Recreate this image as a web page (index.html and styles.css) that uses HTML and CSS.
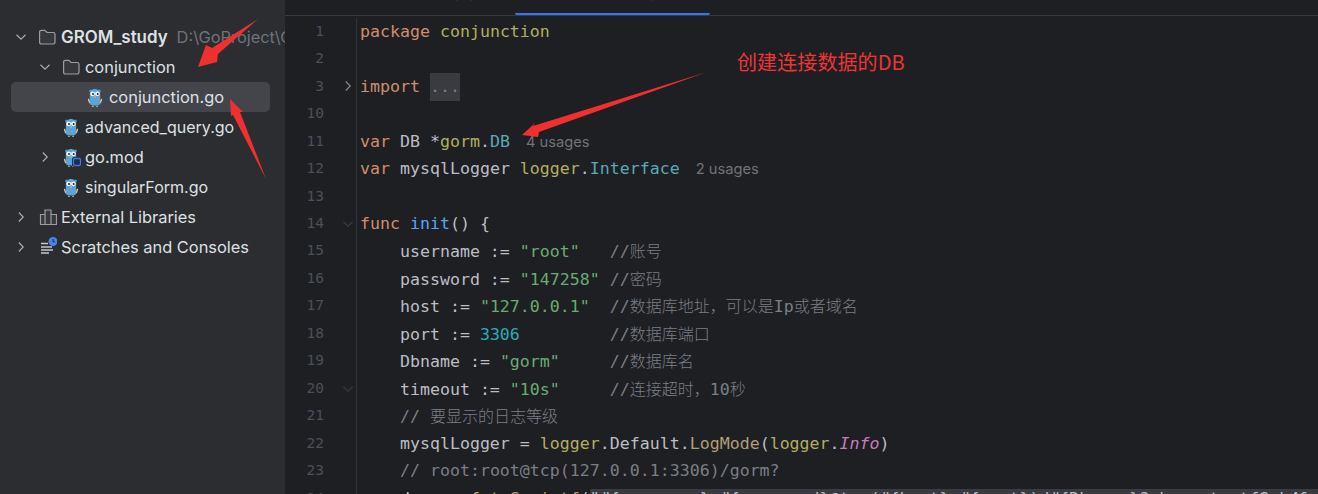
FILE: index.html
```html
<!DOCTYPE html>
<html lang="zh">
<head>
<meta charset="utf-8">
<title>GROM_study</title>
<link rel="stylesheet" href="styles.css">
</head>
<body>
<svg width="0" height="0" class="defs">
  <defs>
    <symbol id="gopher" viewBox="0 0 20 20">
      <circle cx="5.600" cy="4" r="1.500" fill="#4f98c8"/>
      <circle cx="14.400" cy="4" r="1.500" fill="#4f98c8"/>
      <path d="M4.600 15.500 3.600 12.500M15.400 15.500l1-3" stroke="#e8c9a0" stroke-width="1.400" stroke-linecap="round"/>
      <path d="M4.800 8c0-4 2.200-6 5.200-6s5.200 2 5.200 6v8c0 1.800-1.700 2.500-5.200 2.500S4.800 17.800 4.800 16z" fill="#5aa4d6"/>
      <path d="M7 19.300h1.800M11.200 19.300H13" stroke="#e8c9a0" stroke-width="1.100"/>
      <circle cx="7.600" cy="6.800" r="2.400" fill="#f4f6f8"/>
      <circle cx="12.400" cy="6.800" r="2.400" fill="#f4f6f8"/>
      <circle cx="8" cy="7" r="1" fill="#1e2a35"/>
      <circle cx="12.700" cy="7" r="1" fill="#1e2a35"/>
      <ellipse cx="10" cy="10" rx="1.100" ry=".8" fill="#d9b48a"/>
    </symbol>
    <symbol id="folder" viewBox="0 0 20 20">
      <path d="M2.600 5c0-1 .7-1.700 1.700-1.700h3.500l2.300 2.200h6.200c1 0 1.700.7 1.700 1.700v8.100c0 1-.7 1.700-1.700 1.700H4.300c-1 0-1.700-.7-1.700-1.700z" fill="#36383c" stroke="#9a9da4" stroke-width="1.200"/>
    </symbol>
    <symbol id="open" viewBox="0 0 16 16">
      <path d="M3.500 5.800 8 10.200l4.500-4.400" fill="none" stroke="#a8abb2" stroke-width="1.200"/>
    </symbol>
    <symbol id="closed" viewBox="0 0 16 16">
      <path d="M5.800 3.500 10.200 8l-4.400 4.500" fill="none" stroke="#a8abb2" stroke-width="1.200"/>
    </symbol>
  </defs>
</svg>

<div class="app">
  <aside class="tree">
    <div class="row depth0">
      <svg class="chev"><use href="#open"/></svg>
      <svg class="ico"><use href="#folder"/></svg>
      <span class="name bold">GROM_study</span><span class="path">D:\GoProject\GROM_study</span>
    </div>
    <div class="row depth1">
      <svg class="chev"><use href="#open"/></svg>
      <svg class="ico"><use href="#folder"/></svg>
      <span class="name">conjunction</span>
    </div>
    <div class="row depth2 selected">
      <span class="chev"></span>
      <svg class="ico"><use href="#gopher"/></svg>
      <span class="name">conjunction.go</span>
    </div>
    <div class="row depth1">
      <span class="chev"></span>
      <svg class="ico"><use href="#gopher"/></svg>
      <span class="name tight">advanced_query.go</span>
    </div>
    <div class="row depth1">
      <svg class="chev"><use href="#closed"/></svg>
      <svg class="ico" viewBox="0 0 20 20">
        <use href="#gopher" width="20" height="20"/>
        <rect x="11" y="10" width="10" height="10" rx="2.500" fill="#2b2d30"/>
        <rect x="12.500" y="11.500" width="7" height="7" rx="1.500" fill="#1f2c4a" stroke="#3d76e8" stroke-width="1.300"/>
      </svg>
      <span class="name">go.mod</span>
    </div>
    <div class="row depth1">
      <span class="chev"></span>
      <svg class="ico"><use href="#gopher"/></svg>
      <span class="name tight">singularForm.go</span>
    </div>
    <div class="row depth0">
      <svg class="chev"><use href="#closed"/></svg>
      <svg class="ico" viewBox="0 0 20 20">
        <path d="M3.500 7.500H8v10H3.500zM8 3h6v14.500H8zM14 7.500h5.500v10H14z" fill="#36383c" stroke="#9a9da4" stroke-width="1.200"/>
      </svg>
      <span class="name">External Libraries</span>
    </div>
    <div class="row depth0">
      <svg class="chev"><use href="#closed"/></svg>
      <svg class="ico" viewBox="0 0 20 20">
        <path d="M4 6.500h7M4 10h11M4 13h12M4 16h8" stroke="#c4c7cc" stroke-width="1.300"/>
        <circle cx="16" cy="4.500" r="4.500" fill="#4a82e8"/>
        <path d="M16 2v2.800h2.200" fill="none" stroke="#1e2a45" stroke-width="1"/>
      </svg>
      <span class="name">Scratches and Consoles</span>
    </div>
  </aside>

  <main class="editor">
    <div class="tabs">
      <div class="tab tab-first"><span class="tab-label">advanced_query.go</span></div>
      <div class="tab tab-active"><span class="tab-label">conjunction.go</span></div>
    </div>
    <div class="code">
      <div class="line"><span class="num">1</span><span class="fold"></span><span class="src"><b class="k">package</b> <b class="p">conjunction</b></span></div>
      <div class="line"><span class="num">2</span><span class="fold"></span><span class="src"></span></div>
      <div class="line"><span class="num">3</span><span class="fold"><svg class="fold-ico"><use href="#closed"/></svg></span><span class="src"><b class="k">import</b> <b class="dots">...</b></span></div>
      <div class="line"><span class="num">10</span><span class="fold"></span><span class="src"></span></div>
      <div class="line"><span class="num">11</span><span class="fold"></span><span class="src"><b class="k">var</b> DB *<b class="p">gorm</b>.<b class="t">DB</b><span class="hint">4 usages</span></span></div>
      <div class="line"><span class="num">12</span><span class="fold"></span><span class="src"><b class="k">var</b> mysqlLogger <b class="p">logger</b>.<b class="t">Interface</b><span class="hint">2 usages</span></span></div>
      <div class="line"><span class="num">13</span><span class="fold"></span><span class="src"></span></div>
      <div class="line"><span class="num">14</span><span class="fold"><svg class="fold-ico dim"><use href="#open"/></svg></span><span class="src"><b class="k">func</b> <b class="f">init</b>() {</span></div>
      <div class="line"><span class="num">15</span><span class="fold"></span><span class="src">    username := <b class="s">"root"</b>   <b class="c">//<i class="zh">账号</i></b></span></div>
      <div class="line"><span class="num">16</span><span class="fold"></span><span class="src">    password := <b class="s">"147258"</b> <b class="c">//<i class="zh">密码</i></b></span></div>
      <div class="line"><span class="num">17</span><span class="fold"></span><span class="src">    host := <b class="s">"127.0.0.1"</b>  <b class="c">//<i class="zh">数据库地址，可以是</i>Ip<i class="zh">或者域名</i></b></span></div>
      <div class="line"><span class="num">18</span><span class="fold"></span><span class="src">    port := <b class="n">3306</b>         <b class="c">//<i class="zh">数据库端口</i></b></span></div>
      <div class="line"><span class="num">19</span><span class="fold"></span><span class="src">    Dbname := <b class="s">"gorm"</b>     <b class="c">//<i class="zh">数据库名</i></b></span></div>
      <div class="line"><span class="num">20</span><span class="fold"><svg class="fold-ico dim"><use href="#open"/></svg></span><span class="src">    timeout := <b class="s">"10s"</b>     <b class="c">//<i class="zh">连接超时，</i>10<i class="zh">秒</i></b></span></div>
      <div class="line"><span class="num">21</span><span class="fold"></span><span class="src">    <b class="c">// <i class="zh">要显示的日志等级</i></b></span></div>
      <div class="line"><span class="num">22</span><span class="fold"></span><span class="src">    mysqlLogger = <b class="p">logger</b>.Default.<b class="m">LogMode</b>(<b class="p">logger</b>.<em class="it">Info</em>)</span></div>
      <div class="line"><span class="num">23</span><span class="fold"></span><span class="src">    <b class="c">// root:root@tcp(127.0.0.1:3306)/gorm?</b></span></div>
      <div class="line"><span class="num">24</span><span class="fold"></span><span class="src">    dsn := <b class="p">fmt</b>.<b class="m">Sprintf</b>(<b class="inj">"#{username}:#{password}@tcp(#{host}:#{port})/#{Dbname}?charset=utf8mb4&amp;parseTime=True&amp;loc=Local"</b></span></div>
    </div>
  </main>

  <svg class="arrows" viewBox="0 0 1318 494" aria-hidden="true">
    <path d="M198 67 206 45 212 48 258 19 218 54 217 62z"/>
    <path d="M230 99 243 112 240 112 266 179 233 115 231 116z"/>
    <path d="M522 135 535 123 533 126 707 72 539 132 538 137z"/>
  </svg>
  <div class="note">创建连接数据的DB</div>
</div>
</body>
</html>
```

FILE: styles.css
```css
* { box-sizing: border-box; }

html, body {
  margin: 0;
  height: 494px;
  overflow: hidden;
  background: #1e1f22;
}

.defs { position: absolute; }

.app {
  position: relative;
  display: flex;
  width: 1318px;
  height: 494px;
  overflow: hidden;
}

/* project tree */
.tree {
  flex: 0 0 285px;
  height: 494px;
  padding-top: 22px;
  overflow: hidden;
  background: #2b2d30;
  font: 400 16.4px/30px Inter, "Noto Sans", sans-serif;
  color: #dfe1e5;
}

.row {
  display: flex;
  align-items: center;
  width: 259px;
  height: 30px;
  margin-left: 11px;
  white-space: nowrap;
}

.depth0 { padding-left: 2px; }
.depth1 { padding-left: 26px; }
.depth2 { padding-left: 50px; }

.selected {
  background: #43454a;
  border-radius: 5px;
}

.chev {
  flex: 0 0 16px;
  width: 16px;
  height: 16px;
  margin-right: 8px;
}

.ico {
  flex: 0 0 20px;
  width: 20px;
  height: 20px;
  margin-right: 4px;
}

.tight { font-size: 16.05px; }

.bold {
  font-size: 16.9px;
  font-weight: 600;
}

.path {
  margin-left: 9px;
  color: #6f737a;
}

/* editor */
.editor {
  flex: 1;
  min-width: 0;
  height: 494px;
  overflow: hidden;
}

.tabs {
  display: flex;
  height: 16px;
  overflow: hidden;
  border-bottom: 1px solid #393b40;
  font: 400 15px/0 Inter, sans-serif;
  color: #a8abb2;
}

.tab {
  height: 15px;
  white-space: nowrap;
}

.tab-label {
  display: block;
  margin-top: -8px;
}

.tab-first {
  width: 230px;
  padding-left: 60px;
}

.tab-active {
  width: 195px;
  padding-left: 45px;
  border-bottom: 2px solid #3574f0;
  border-radius: 0 0 2px 2px;
}

.code {
  padding-top: 1.7px;
  font: 400 16.6px/27.47px "DejaVu Sans Mono", "Liberation Mono", "Noto Sans CJK SC", monospace;
  color: #bcbec4;
}

.line {
  display: flex;
  height: 27.47px;
  white-space: pre;
}

.num {
  flex: 0 0 39px;
  text-align: right;
  font-size: 14.5px;
  color: #4b5059;
}

.fold {
  display: flex;
  align-items: center;
  flex: 0 0 33px;
  padding-left: 16px;
  border-right: 1px solid #313438;
}

.fold-ico {
  width: 16px;
  height: 16px;
  opacity: .75;
}

.fold-ico.dim { opacity: .2; }

.src { margin-left: 3px; }

.src b { font-weight: 400; }

.k { color: #cf8e6d; }
.p { color: #b3ae60; }
.t { color: #5ba8b8; }
.s { color: #6aab73; }
.n { color: #2aacb8; }
.f { color: #56a8f5; }
.m { color: #b09d79; }
.c { color: #7a7e85; }

.it {
  font-style: italic;
  color: #c77dbb;
}

.zh {
  font-family: "Noto Sans CJK SC", sans-serif;
  font-size: 16px;
  font-style: normal;
  font-weight: 300;
}

.dots {
  display: inline-block;
  height: 28px;
  background: #393b40;
  color: #7a7e85;
}

.inj { background: #393b40; }

.hint {
  margin-left: 16px;
  font: 400 14.7px/27.47px Inter, sans-serif;
  color: #6f737a;
}

/* annotations drawn over the screenshot */
.arrows {
  position: absolute;
  left: 0;
  top: 0;
  width: 1318px;
  height: 494px;
  fill: #f0302f;
  pointer-events: none;
}

.note {
  position: absolute;
  left: 737px;
  top: 47px;
  font: 400 20px/30px "Noto Sans CJK SC", sans-serif;
  letter-spacing: .1px;
  color: #ee3535;
  white-space: nowrap;
}
```
